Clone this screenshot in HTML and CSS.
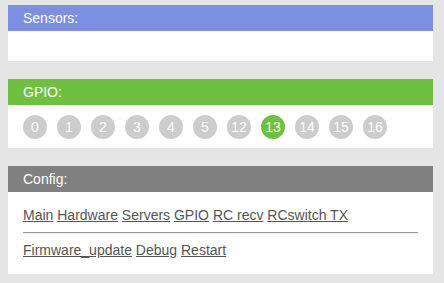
FILE: index.html
```html
<!DOCTYPE html>
<html lang="en">
<head>
    <meta charset="UTF-8">
    <meta name="viewport" content="width=device-width, initial-scale=1.0">
    <title>Device</title>
    <link rel="stylesheet" href="styles.css">
</head>
<body>
    <!-- Sensors -->
    <div class="panel">
        <div class="panel-head sensors">Sensors:</div>
        <div class="panel-body"></div>
    </div>

    <!-- GPIO -->
    <div class="panel">
        <div class="panel-head gpio">GPIO:</div>
        <div class="panel-body pins">
            <span class="pin">0</span>
            <span class="pin">1</span>
            <span class="pin">2</span>
            <span class="pin">3</span>
            <span class="pin">4</span>
            <span class="pin">5</span>
            <span class="pin">12</span>
            <span class="pin on">13</span>
            <span class="pin">14</span>
            <span class="pin">15</span>
            <span class="pin">16</span>
        </div>
    </div>

    <!-- Config -->
    <div class="panel">
        <div class="panel-head config">Config:</div>
        <div class="panel-body links">
            <div class="row">
                <a href="#">Main</a> <a href="#">Hardware</a> <a href="#">Servers</a> <a href="#">GPIO</a> <a href="#">RC recv</a> <a href="#">RCswitch TX</a>
            </div>
            <hr>
            <div class="row">
                <a href="#">Firmware_update</a> <a href="#">Debug</a> <a href="#">Restart</a>
            </div>
        </div>
    </div>
</body>
</html>
```

FILE: styles.css
```css
/* General */
body {
    font-family: "Liberation Sans", Arial, sans-serif;
    font-size: 14px;
    line-height: 16px;
    margin: 0;
    padding: 5px 11px 0 8px;
    background: #e5e5e5;
    color: #555;
}

/* Panels */
.panel {
    background: #fff;
    margin-bottom: 18px;
}

.panel-head {
    color: #fff;
    padding: 5px 15px;
}

.sensors {
    background: #7d8fe2;
}

.gpio {
    background: #6fbf40;
}

.config {
    background: #808080;
}

.panel-body {
    padding: 15px;
}

/* GPIO pins */
.pins {
    display: flex;
    gap: 10px;
    padding: 10px 15px 9px;
}

.pin {
    width: 24px;
    height: 24px;
    line-height: 24px;
    border-radius: 50%;
    background: #ccc;
    color: #fff;
    text-align: center;
}

.pin.on {
    background: #6fbf40;
}

/* Config links */
.links {
    padding: 15px 15px 16px;
}

.links a {
    color: #555;
}

.links hr {
    border: 0;
    border-top: 1px solid #999;
    border-bottom: 1px solid #eee;
    margin: 9px 0 8px;
}
```
